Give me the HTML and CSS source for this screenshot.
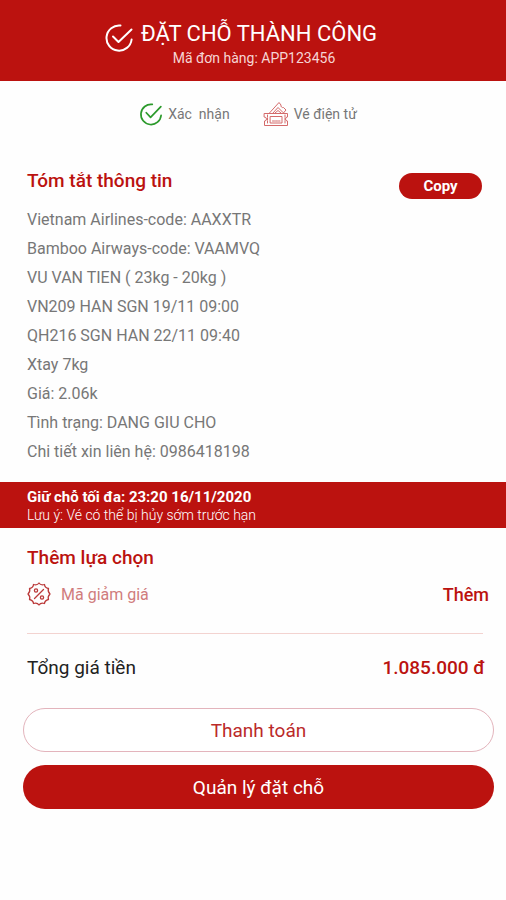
FILE: index.html
```html
<!DOCTYPE html>
<html lang="vi">
<head>
<meta charset="utf-8">
<meta name="viewport" content="width=device-width, initial-scale=1">
<title>Đặt chỗ thành công</title>
<link rel="stylesheet" href="styles.css">
</head>
<body>
<header class="header">
  <svg class="header-icon" viewBox="0 0 28 28" aria-hidden="true">
    <path d="M15.5 1.5A12.6 12.6 0 1 0 26.6 15.5"/>
    <path d="M8 12.5L13.5 18L26.5 5.5"/>
  </svg>
  <div class="header-text">
    <h1 class="title">ĐẶT CHỖ THÀNH CÔNG</h1>
    <p class="order">Mã đơn hàng: APP123456</p>
  </div>
</header>
<main>
  <ul class="steps">
    <li class="step">
      <svg class="step-check" viewBox="0 0 28 28" aria-hidden="true">
        <path d="M15.5 2.8A11.8 11.8 0 1 0 25.8 15.5"/>
        <path d="M8.5 12.5L13.5 18L25.5 5.5"/>
      </svg>
      <span class="step-confirm">Xác  nhận</span>
    </li>
    <li class="step">
      <svg class="step-ticket" viewBox="0 0 26 26" aria-hidden="true">
        <path d="M1.5 12.5H24.5V16A2 2 0 0 0 24.5 20V24.5H1.5V20A2 2 0 0 0 1.5 16Z"/>
        <path d="M7.5 15.5H19V22H7.5Z"/>
        <path d="M9.5 20H17M4.5 14V23M22 14V23" stroke-dasharray="2 1"/>
        <path d="M6 12.5L16 1.5L18 4A2 2 0 0 0 20.5 6.5L23 9L20 12.5"/>
        <path d="M9.5 12.5L15 6.5L20 11.5M12 12L15 9.5L18 12"/>
      </svg>
      <span>Vé điện tử</span>
    </li>
  </ul>
  <section class="summary">
    <div class="summary-head">
      <h2 class="section-title">Tóm tắt thông tin</h2>
      <button class="copy" type="button">Copy</button>
    </div>
    <ul class="details">
      <li>Vietnam Airlines-code: AAXXTR</li>
      <li>Bamboo Airways-code: VAAMVQ</li>
      <li>VU VAN TIEN ( 23kg - 20kg )</li>
      <li>VN209 HAN SGN 19/11 09:00</li>
      <li>QH216 SGN HAN 22/11 09:40</li>
      <li>Xtay 7kg</li>
      <li>Giá: 2.06k</li>
      <li>Tình trạng: DANG GIU CHO</li>
      <li>Chi tiết xin liên hệ: 0986418198</li>
    </ul>
  </section>
  <div class="notice">
    <p class="deadline">Giữ chỗ tối đa: 23:20 16/11/2020</p>
    <p class="note">Lưu ý: Vé có thể bị hủy sớm trước hạn</p>
  </div>
  <section class="options">
    <h2 class="section-title">Thêm lựa chọn</h2>
    <div class="coupon">
      <svg class="coupon-icon" viewBox="0 0 24 24" aria-hidden="true">
        <path d="M12 1Q13.7 3.6 17.5 2.5Q17.7 5.6 21.5 6.5Q20.4 9.4 23 12Q20.4 14.6 21.5 17.5Q17.7 18.4 17.5 21.5Q13.7 20.4 12 23Q10.3 20.4 6.5 21.5Q6.3 18.4 2.5 17.5Q3.6 14.6 1 12Q3.6 9.4 2.5 6.5Q6.3 5.6 6.5 2.5Q10.3 3.6 12 1Z"/>
        <path d="M7.5 16.5L16.5 7.5"/>
        <circle cx="9" cy="8.5" r="1.6"/>
        <circle cx="15" cy="15.5" r="1.6"/>
      </svg>
      <span class="coupon-name">Mã giảm giá</span>
      <button class="add" type="button">Thêm</button>
    </div>
  </section>
  <div class="total">
    <span>Tổng giá tiền</span>
    <strong class="price">1.085.000 đ</strong>
  </div>
  <div class="actions">
    <button class="action action-outline" type="button">Thanh toán</button>
    <button class="action action-solid" type="button">Quản lý đặt chỗ</button>
  </div>
</main>
</body>
</html>
```

FILE: styles.css
```css
* {
  box-sizing: border-box;
}

body {
  margin: 0;
  background: #fefefe;
  color: #777;
  font-family: Roboto, "Liberation Sans", sans-serif;
  font-size: 16px;
  font-weight: 400;
}

h1, h2, p, ul {
  margin: 0;
  padding: 0;
}

ul {
  list-style: none;
}

button {
  padding: 0;
  border: 0;
  font-family: inherit;
  cursor: pointer;
}

svg {
  flex: none;
  fill: none;
  stroke-linecap: round;
  stroke-linejoin: round;
}

.header {
  display: flex;
  justify-content: center;
  gap: 8px;
  padding: 20px 24px 13px 0;
  background: #bb120f;
  color: #fff;
}

.header-icon {
  width: 28px;
  height: 28px;
  margin-top: 4px;
  stroke: #fff;
  stroke-width: 2;
}

.header-text {
  text-align: center;
}

.title {
  font-size: 22px;
  font-weight: 400;
  line-height: 28px;
}

.order {
  padding-right: 10px;
  color: #f6d5d4;
  font-size: 14px;
  line-height: 20px;
}

.steps {
  display: flex;
  justify-content: center;
  gap: 33px;
  padding: 20px 10px 0 0;
  font-size: 14px;
}

.step {
  display: flex;
  align-items: center;
  gap: 5px;
  height: 26px;
}

.step-confirm {
  white-space: pre;
}

.step-check {
  width: 24px;
  height: 24px;
  stroke: #2c9a2c;
  stroke-width: 2;
}

.step-ticket {
  width: 26px;
  height: 26px;
  stroke: #d46a6a;
  stroke-width: 1;
}

.summary {
  padding: 40px 24px 16px 27px;
}

.summary-head {
  display: flex;
  align-items: flex-start;
  justify-content: space-between;
  padding-bottom: 6px;
}

.section-title {
  color: #bb120f;
  font-size: 19px;
  font-weight: 500;
  line-height: 28px;
}

.copy {
  width: 83px;
  height: 26px;
  margin-top: 6px;
  border-radius: 13px;
  background: #bb120f;
  color: #fff;
  font-size: 15px;
  font-weight: 700;
}

.details {
  line-height: 29px;
}

.notice {
  padding: 6px 27px 4px;
  background: #bb120f;
  color: #fff;
  line-height: 18px;
}

.deadline {
  font-size: 15px;
  font-weight: 700;
}

.note {
  font-size: 14px;
  font-weight: 300;
}

.options {
  margin: 0 23px 0 27px;
  padding: 16px 0 25px;
  border-bottom: 1px solid #f3d3d0;
}

.coupon {
  display: flex;
  align-items: center;
  gap: 10px;
  height: 28px;
  margin: 8px -6px 0 0;
}

.coupon-icon {
  width: 24px;
  height: 24px;
  stroke: #bb3a3a;
  stroke-width: 1.3;
}

.coupon-name {
  flex: 1;
  color: #d07c7c;
}

.add {
  background: none;
  color: #bb120f;
  font-size: 18px;
  font-weight: 500;
}

.total {
  display: flex;
  align-items: center;
  justify-content: space-between;
  padding: 20px 21px 26px 27px;
  color: #222;
  font-size: 19px;
  line-height: 28px;
}

.price {
  color: #bb120f;
  font-weight: 500;
}

.actions {
  display: flex;
  flex-direction: column;
  gap: 13px;
  padding: 0 12px 24px 23px;
}

.action {
  height: 44px;
  border-radius: 22px;
  font-size: 19px;
}

.action-outline {
  border: 1px solid #e3b4bc;
  background: #fff;
  color: #bb2a2a;
}

.action-solid {
  background: #bb120f;
  color: #fff;
}
```
